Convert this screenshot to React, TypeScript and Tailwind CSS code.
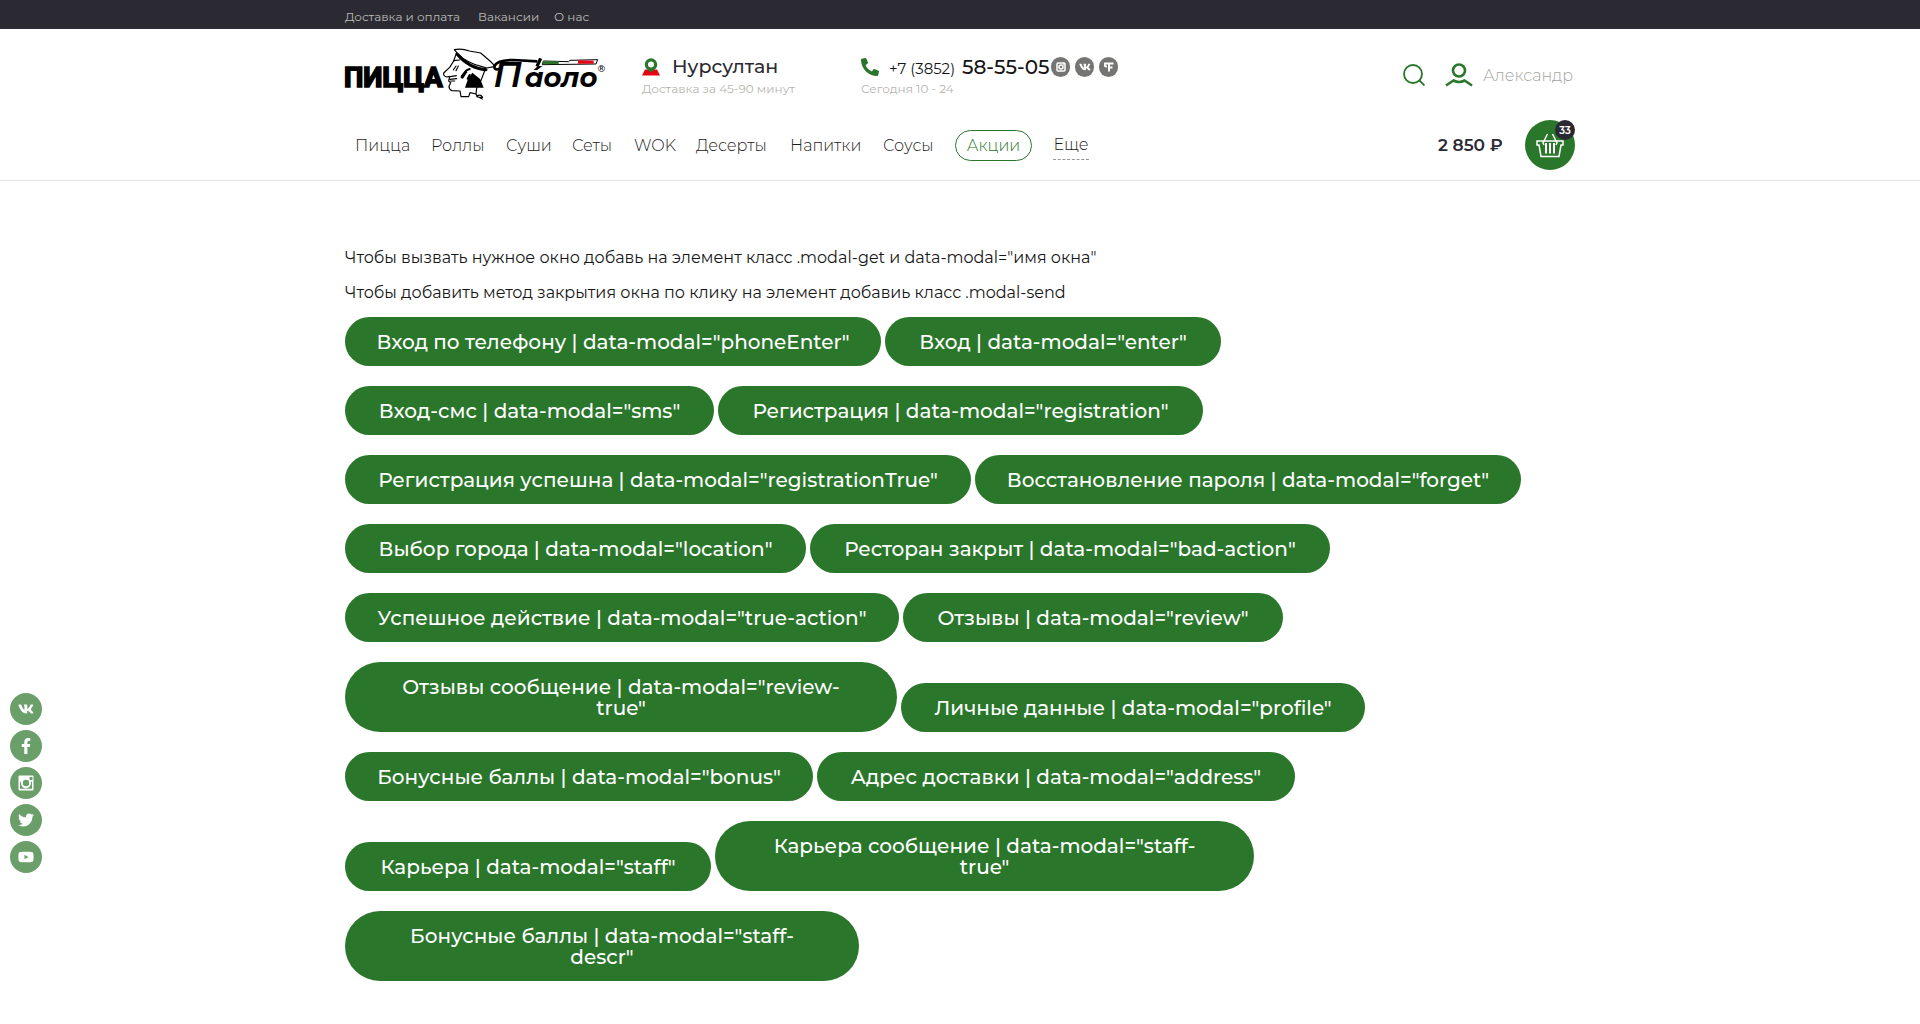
import React from "react";
import { FaVk, FaFacebookF, FaTwitter, FaYoutube, FaPhone } from "react-icons/fa";

type Modal = { title: string; modal: string; width: string };

const rows: Modal[][] = [
  [
    { title: "Вход по телефону", modal: "phoneEnter", width: "w-[536px] px-7" },
    { title: "Вход", modal: "enter", width: "w-[336px] px-7" },
  ],
  [
    { title: "Вход-смс", modal: "sms", width: "w-[369px] px-7" },
    { title: "Регистрация", modal: "registration", width: "w-[485px] px-7" },
  ],
  [
    { title: "Регистрация успешна", modal: "registrationTrue", width: "w-[626px] px-7" },
    { title: "Восстановление пароля", modal: "forget", width: "w-[546px] px-7" },
  ],
  [
    { title: "Выбор города", modal: "location", width: "w-[461px] px-7" },
    { title: "Ресторан закрыт", modal: "bad-action", width: "w-[520px] px-7" },
  ],
  [
    { title: "Успешное действие", modal: "true-action", width: "w-[554px] px-7" },
    { title: "Отзывы", modal: "review", width: "w-[380px] px-7" },
  ],
  [
    { title: "Отзывы сообщение", modal: "review-true", width: "w-[552px] px-10" },
    { title: "Личные данные", modal: "profile", width: "w-[464px] px-7" },
  ],
  [
    { title: "Бонусные баллы", modal: "bonus", width: "w-[468px] px-7" },
    { title: "Адрес доставки", modal: "address", width: "w-[478px] px-7" },
  ],
  [
    { title: "Карьера", modal: "staff", width: "w-[366px] px-7" },
    { title: "Карьера сообщение", modal: "staff-true", width: "w-[539px] px-10" },
  ],
  [{ title: "Бонусные баллы", modal: "staff-descr", width: "w-[514px] px-10" }],
];

const nav = [
  { label: "Пицца", width: "w-[55px]" },
  { label: "Роллы", width: "w-[54px]" },
  { label: "Суши", width: "w-[45px]" },
  { label: "Сеты", width: "w-[41px]" },
  { label: "WOK", width: "w-[41px]" },
  { label: "Десерты", width: "w-[73px]" },
  { label: "Напитки", width: "w-[72px]" },
  { label: "Соусы", width: "w-[51px]" },
];

function Instagram({ className }: { className: string }) {
  return (
    <svg viewBox="0 0 16 16" className={className} fill="none" aria-hidden="true">
      <path
        fill="currentColor"
        fillRule="evenodd"
        d="M1.500 0.500h13a1 1 0 0 1 1 1v13a1 1 0 0 1-1 1h-13a1 1 0 0 1-1-1v-13a1 1 0 0 1 1-1zM11.500 2v3h3V2zM2 6.800v7h12v-7h-1.500a4.900 4.900 0 1 1-9.200 0z"
      />
      <circle cx="8" cy="8" r="4" stroke="currentColor" strokeWidth="1.600" />
      <circle cx="8" cy="8" r="3.200" fill="#6a9f6a" />
    </svg>
  );
}

function Logo() {
  return (
    <svg viewBox="39 145 798 156" className="h-[52px] w-[266px]" role="img" aria-label="Пицца Паоло">
      <text x="42" y="263" fontSize="82" fontWeight="700" stroke="#000" strokeWidth="5" fontFamily="Roboto, sans-serif">ПИЦЦА</text>
      <g fill="none" stroke="#000" strokeWidth="3.500" strokeLinejoin="round" strokeLinecap="round">
        <path d="M383 162L373 150Q395 145 418 154L452 160L480 184L496 200L470 205L456 201Q410 190 383 162Z" fill="#fff" />
        <path d="M378 164L371 184L359 203L341 220Q339 229 350 232L359 230L356 244L362 249L357 260Q357 270 366 273L390 274L393 291H416L420 279L438 283L442 292L458 293Q451 281 440 290L457 298" />
        <path d="M466 208L454 240L440 266L438 282M361 231L379 228M359 239L380 237M362 244L374 244" />
        <path d="M371 183L389 181M378 199L370 211M385 199L378 213" />
        <path d="M381 163Q419 207 468 210" strokeWidth="9" />
        <path d="M395 230L409 212L419 208M413 237L419 226" strokeWidth="6" />
      </g>
      <path d="M405 264L414 238L427 219L451 239L461 264ZM391 235L407 211L412 217L399 237Z" />
      <text x="490" y="263" fontSize="106" fontStyle="italic" fontWeight="600" fontFamily="Montserrat, Inter, sans-serif">П</text>
      <text x="584" y="263" fontSize="82" fontStyle="italic" fontWeight="700" fontFamily="Montserrat, Inter, sans-serif">áоло</text>
      <path d="M508 208Q492 212 493 200Q500 181 550 181L622 185" fill="none" stroke="#000" strokeWidth="8" />
      <path d="M632 176L621 200" stroke="#000" strokeWidth="10" />
      <path d="M640 184L716 186L720 182L803 180L798 193L637 195Z" fill="#fff" stroke="#000" strokeWidth="3" />
      <path d="M640 185H686V194H638Z" fill="#2a762a" />
      <path d="M744 182L791 183V192H744Z" fill="#e20713" />
      <text x="800" y="217" fontSize="28" fontWeight="500" fontFamily="'DejaVu Sans', sans-serif">®</text>
    </svg>
  );
}

function Basket() {
  return (
    <svg viewBox="0 0 28 25" className="h-[25px] w-[28px]" fill="none" stroke="currentColor" strokeWidth="1.500" aria-hidden="true">
      <path d="M1 8H27V12H25L23 23.500H5L3 12H1ZM8 12L7 10L11.500 1M20 12L21 10L16.500 1" />
      <path d="M10 10V20.500M14 10V20.500M18 10V20.500" strokeWidth="2" />
    </svg>
  );
}

const side = [
  { label: "ВКонтакте", icon: <FaVk className="size-4" /> },
  { label: "Facebook", icon: <FaFacebookF className="size-4" /> },
  { label: "Instagram", icon: <Instagram className="size-4" /> },
  { label: "Twitter", icon: <FaTwitter className="size-4" /> },
  { label: "YouTube", icon: <FaYoutube className="size-4" /> },
];

export default function App() {
  return (
    <div className="min-h-screen bg-white font-['Montserrat','Inter',sans-serif] text-[#161616]">
      <div className="bg-[#2b2a33]">
        <div className="mx-auto flex h-[29px] max-w-[1230px] items-center gap-[14px] pt-1 text-xs text-[#bcbcb4]">
          <a href="#delivery" className="w-[119px] whitespace-nowrap">Доставка и оплата</a>
          <a href="#jobs" className="w-[62px] whitespace-nowrap">Вакансии</a>
          <a href="#about">О нас</a>
        </div>
      </div>

      <header className="border-b border-[#e5e5e5]">
        <div className="mx-auto flex max-w-[1230px] items-start pt-[19px]">
          <a href="#home" className="-ml-[2px]"><Logo /></a>
          <div className="ml-[33px] w-[219px] pt-[7px]">
            <button className="flex h-6 items-center gap-3 text-[19px] font-medium text-[#2b2a33]">
              <svg viewBox="0 0 18 18" className="size-[18px]" aria-hidden="true">
                <path d="M3 11.500H15L18 17.500H0Z" fill="#e20713" />
                <path d="M9 14.500L4.300 10.500A6.200 6.200 0 1 1 13.700 10.500Z" fill="#2a762a" />
                <circle cx="9" cy="6.500" r="3" fill="#fff" />
              </svg>
              Нурсултан
            </button>
            <p className="text-xs leading-5 text-[#b5b5b0]">Доставка за 45-90 минут</p>
          </div>
          <div className="pt-[7px]">
            <div className="flex h-6 items-center">
              <a href="tel:+73852585505" className="flex items-baseline whitespace-nowrap">
                <FaPhone className="mr-[10px] size-[18px] -scale-x-100 self-center text-[#2a762a]" />
                <span className="w-[73px] text-[15px]">+7 (3852)</span>
                <span className="w-[89px] text-xl font-medium">58-55-05</span>
              </a>
              <div className="flex gap-[5px] text-white">
                <a href="#instagram" aria-label="Instagram" className="flex h-5 w-[19px] items-center justify-center rounded-full bg-[#757573]">
                  <svg viewBox="0 0 10 10" className="size-[10px]" fill="none" stroke="currentColor" strokeWidth="1.500" aria-hidden="true">
                    <rect x="1" y="1" width="8" height="8" rx="1" />
                    <circle cx="5" cy="5" r="2" />
                    <path d="M7 2H8.500" />
                  </svg>
                </a>
                <a href="#vk" aria-label="ВКонтакте" className="flex h-5 w-[19px] items-center justify-center rounded-full bg-[#757573]">
                  <FaVk className="size-3" />
                </a>
                <a href="#flamp" aria-label="Flamp" className="flex h-5 w-[19px] items-center justify-center rounded-full bg-[#757573]">
                  <svg viewBox="0 0 10 10" className="size-[10px]" fill="none" stroke="currentColor" strokeWidth="2" aria-hidden="true">
                    <path d="M9.500 1.500H1Q0 5 3 4.500M5 9.500V1.500M5 5.500H8.500" />
                  </svg>
                </a>
              </div>
            </div>
            <p className="text-xs leading-5 text-[#b5b5b0]">Сегодня 10 - 24</p>
          </div>
          <div className="ml-auto flex items-center pt-[14px]">
            <button aria-label="Поиск" className="mr-5 text-[#2a762a]">
              <svg viewBox="0 0 22 22" className="size-[22px]" fill="none" stroke="currentColor" strokeWidth="1.800" aria-hidden="true">
                <circle cx="10" cy="10" r="9" />
                <path d="M16 16L21.500 21.500" />
              </svg>
            </button>
            <a href="#account" className="flex items-center gap-[10px] text-base font-light text-[#a5a5a0]">
              <svg viewBox="0 0 28 24" className="h-6 w-7 text-[#2a762a]" fill="none" stroke="currentColor" strokeWidth="2.600" aria-hidden="true">
                <circle cx="14" cy="7.500" r="6" />
                <path d="M1 22.500L8.500 17.500Q14 20.500 19.500 17.500L27 22.500" />
              </svg>
              <span className="w-[92px] pt-[2px]">Александр</span>
            </a>
          </div>
        </div>

        <div className="mx-auto flex max-w-[1230px] items-center pt-5 pb-[10px]">
          <nav className="flex items-center gap-[21px] pl-[10px] text-base font-light text-[#1c1b22]">
            {nav.map((n) => (
              <a key={n.label} href="#menu" className={`pt-[2px] whitespace-nowrap ${n.width}`}>{n.label}</a>
            ))}
            <a href="#sale" className="flex h-[31px] w-[77px] items-center justify-center rounded-full border border-[#2a762a] pt-[2px] text-[#2a762a]">Акции</a>
            <button className="h-[29px] w-9 border-b border-dashed border-[#999]">Еще</button>
          </nav>
          <span className="ml-auto w-[87px] pt-[2px] text-[17px] font-semibold whitespace-nowrap text-[#2b2a33]">2 850 ₽</span>
          <button aria-label="Корзина" className="relative flex size-[50px] items-center justify-center rounded-full bg-[#2a762a] text-white">
            <Basket />
            <span className="absolute top-0 right-0 flex size-5 items-center justify-center rounded-full bg-[#2b2a33] text-[10px] font-semibold">33</span>
          </button>
        </div>
      </header>

      <main className="mx-auto max-w-[1230px] pt-[65px] pb-10">
        <p className="mb-[11px] text-base">Чтобы вызвать нужное окно добавь на элемент класс .modal-get и data-modal="имя окна"</p>
        <p className="mb-3 text-base">Чтобы добавить метод закрытия окна по клику на элемент добавиь класс .modal-send</p>
        <div className="flex flex-col gap-5">
          {rows.map((row, i) => (
            <div key={i} className="flex items-end gap-1">
              {row.map((b) => (
                <button
                  key={b.modal}
                  data-modal={b.modal}
                  className={`${b.width} rounded-[35px] bg-[#2a762a] pt-[15px] pb-[13px] text-xl leading-[21px] font-medium text-white`}
                >
                  {`${b.title} | data-modal="${b.modal}"`}
                </button>
              ))}
            </div>
          ))}
        </div>
      </main>

      <aside className="fixed top-[693px] left-[10px] flex flex-col gap-[5px]">
        {side.map((s) => (
          <a key={s.label} href="#social" aria-label={s.label} className="flex size-8 items-center justify-center rounded-full bg-[#6a9f6a] text-white">
            {s.icon}
          </a>
        ))}
      </aside>
    </div>
  );
}
